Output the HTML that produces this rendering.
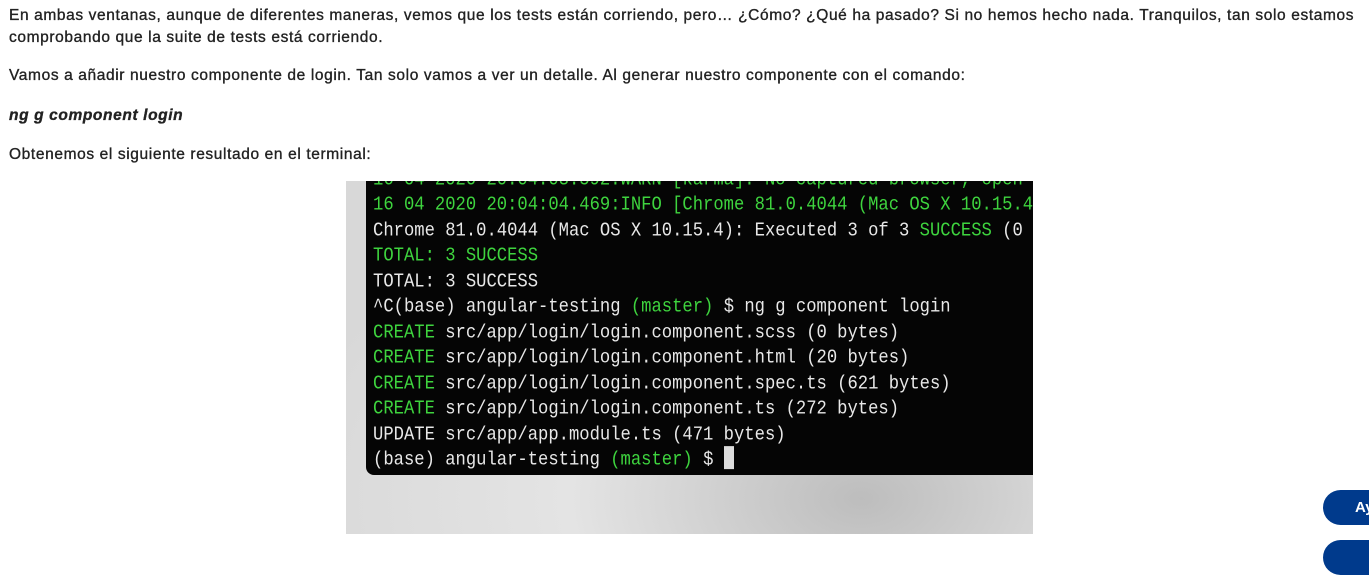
<!DOCTYPE html>
<html><head><meta charset="utf-8"><style>
body{margin:0;width:1369px;height:551px;overflow:hidden;background:#fff;font-family:"Liberation Sans",sans-serif;color:#222;position:relative}
p{position:absolute;left:9px;margin:0;font-size:15.5px;letter-spacing:0.62px;line-height:22px;-webkit-text-stroke:0.35px #222;width:1350px;white-space:nowrap}
.img{position:absolute;left:346px;top:181px;width:687px;height:353px;background:radial-gradient(ellipse at 75% 90%,#bdbdbd,#e4e4e4 40%,#d8d8d8 80%);overflow:hidden}
.term{position:absolute;left:20px;top:-8px;width:700px;height:302px;background:#050505;border-radius:0 0 0 8px;font-family:"Liberation Mono",monospace;font-size:17.2px;color:#e8e8e8;white-space:pre}
.l{position:absolute;left:7px;height:25px;line-height:25px;transform:scaleY(1.15)}
.g{color:#3ed43e}
.cur{display:inline-block;width:10px;height:20px;background:#ddd;vertical-align:-4px}
.btn{position:absolute;left:1323px;width:80px;height:35px;background:#003a8c;border-radius:18px;color:#fff;font-weight:bold;font-size:15px;line-height:35px;padding-left:32px;box-sizing:border-box}
</style></head><body>
<p style="top:5px">En ambas ventanas, aunque de diferentes maneras, vemos que los tests están corriendo, pero… ¿Cómo? ¿Qué ha pasado? Si no hemos hecho nada. Tranquilos, tan solo estamos<br>comprobando que la suite de tests está corriendo.</p>
<p style="top:65px">Vamos a añadir nuestro componente de login. Tan solo vamos a ver un detalle. Al generar nuestro componente con el comando:</p>
<p style="top:105px;font-weight:bold;font-style:italic">ng g component login</p>
<p style="top:144px">Obtenemos el siguiente resultado en el terminal:</p>
<div class="img"><div class="term">
<div class="l g" style="top:-5px">16 04 2020 20:04:03.592:WARN [karma]: No captured browser, open</div>
<div class="l g" style="top:20px">16 04 2020 20:04:04.469:INFO [Chrome 81.0.4044 (Mac OS X 10.15.4)</div>
<div class="l" style="top:46px">Chrome 81.0.4044 (Mac OS X 10.15.4): Executed 3 of 3 <span class="g">SUCCESS</span> (0</div>
<div class="l g" style="top:71px">TOTAL: 3 SUCCESS</div>
<div class="l" style="top:97px">TOTAL: 3 SUCCESS</div>
<div class="l" style="top:122px">^C(base) angular-testing <span class="g">(master)</span> $ ng g component login</div>
<div class="l" style="top:148px"><span class="g">CREATE</span> src/app/login/login.component.scss (0 bytes)</div>
<div class="l" style="top:173px"><span class="g">CREATE</span> src/app/login/login.component.html (20 bytes)</div>
<div class="l" style="top:199px"><span class="g">CREATE</span> src/app/login/login.component.spec.ts (621 bytes)</div>
<div class="l" style="top:224px"><span class="g">CREATE</span> src/app/login/login.component.ts (272 bytes)</div>
<div class="l" style="top:250px">UPDATE src/app/app.module.ts (471 bytes)</div>
<div class="l" style="top:275px">(base) angular-testing <span class="g">(master)</span> $ <span class="cur"></span></div>
</div></div>
<div class="btn" style="top:490px">Ay</div>
<div class="btn" style="top:540px"></div>
</body></html>
